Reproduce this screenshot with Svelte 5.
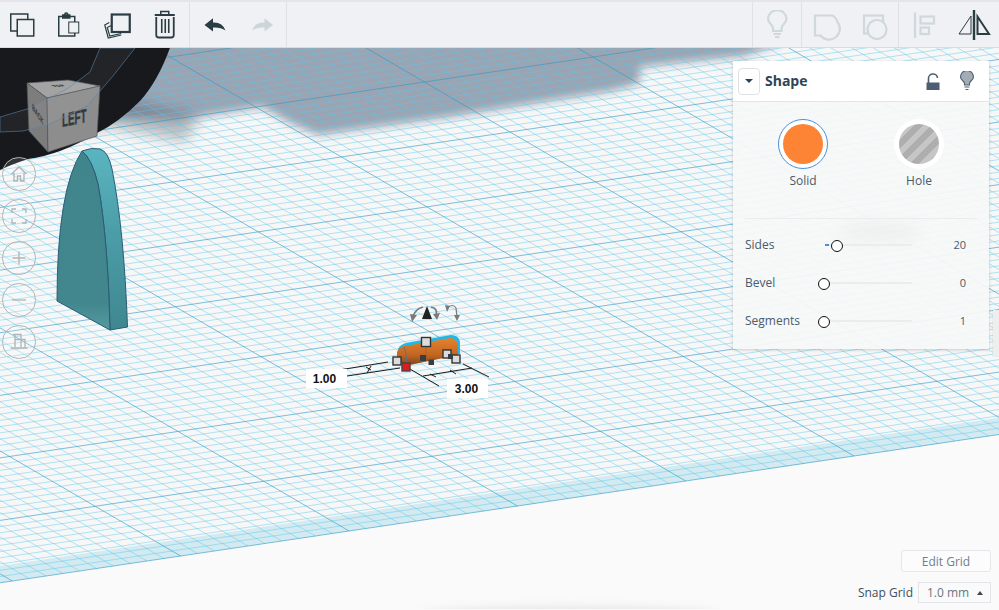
<script lang="ts">
  // grid block coordinates -> screen pixels, measured from major line crossings
  const anchors = [
    [0, 0, 170, 58],
    [2, 1, 593, 58],
    [-4, 8, 180.7, 557],
    [0, 8, 854, 457]
  ];

  function solve(m: number[][]) {
    const n = m.length;
    for (let c = 0; c < n; c++) {
      let p = c;
      for (let r = c + 1; r < n; r++) if (Math.abs(m[r][c]) > Math.abs(m[p][c])) p = r;
      [m[c], m[p]] = [m[p], m[c]];
      for (let r = 0; r < n; r++) {
        if (r === c) continue;
        const f = m[r][c] / m[c][c];
        for (let k = c; k <= n; k++) m[r][k] -= f * m[c][k];
      }
    }
    return m.map((row, i) => row[n] / row[i]);
  }

  const rows: number[][] = [];
  for (const [u, v, x, y] of anchors) {
    rows.push([u, v, 1, 0, 0, 0, -u * x, -v * x, x]);
    rows.push([0, 0, 0, u, v, 1, -u * y, -v * y, y]);
  }
  const h = solve(rows);

  function pt(u: number, v: number) {
    const w = h[6] * u + h[7] * v + 1;
    return ((h[0] * u + h[1] * v + h[2]) / w).toFixed(1) + ' ' + ((h[3] * u + h[4] * v + h[5]) / w).toFixed(1);
  }

  const uMin = -8, uMax = 8, vMin = -3, vMax = 8;
  let minor = '', major = '';
  for (let k = uMin * 10; k <= uMax * 10; k++) {
    const d = `M${pt(k / 10, vMin)}L${pt(k / 10, vMax)}`;
    if (k % 10 === 0) major += d; else minor += d;
  }
  for (let k = vMin * 10; k <= vMax * 10; k++) {
    const d = `M${pt(uMin, k / 10)}L${pt(uMax, k / 10)}`;
    if (k % 10 === 0) major += d; else minor += d;
  }
  const plane = `M${pt(uMin, vMin)}L${pt(uMax, vMin)}L${pt(uMax, vMax)}L${pt(uMin, vMax)}Z`;
  const band = `M${pt(uMin, 7.73)}L${pt(uMax, 7.73)}L${pt(uMax, vMax)}L${pt(uMin, vMax)}Z`;

  const params = [
    { label: 'Sides', value: 20, pos: 11, fill: 4 },
    { label: 'Bevel', value: 0, pos: -2, fill: 0 },
    { label: 'Segments', value: 1, pos: -2, fill: 0 }
  ];
</script>

<div class="app">
  <header class="toolbar">
    <div class="group first">
      <button aria-label="Copy">
        <svg width="30" height="30" viewBox="8.75 9 30 30" class="dark">
          <rect x="10.5" y="13" width="17" height="17" />
          <rect x="17" y="18.5" width="16.5" height="16.5" class="bar" />
        </svg>
      </button>
      <button aria-label="Paste">
        <svg width="30" height="30" viewBox="56.25 9 30 30" class="dark">
          <path d="M63 15.5H59V35H75V15.5H70" />
          <rect x="63" y="14" width="7" height="3" fill="#2a3d42" />
          <circle cx="66.5" cy="13.5" r="1.5" />
          <rect x="69" y="21" width="10" height="11" fill="#f0f1f4" stroke-width="1" />
        </svg>
      </button>
      <button aria-label="Duplicate">
        <svg width="30" height="30" viewBox="103.75 9 30 30" class="dark">
          <path d="M110 21.5L105.500 24L109 37L122 34" stroke-width="1.2" />
          <path d="M112 24.500L108 26.500L110.500 35L122 32.500" stroke-width="1.2" />
          <rect x="112.500" y="13.500" width="18" height="17.500" stroke-width="2.2" class="bar" />
        </svg>
      </button>
      <button aria-label="Delete">
        <svg width="30" height="30" viewBox="151.25 9 30 30" class="dark">
          <path d="M156 14H176" stroke-width="2" />
          <path d="M162 13.5V10.5H170V13.5" stroke-width="1.5" />
          <path d="M157.5 16V34Q157.5 36.5 160 36.5H172.5Q175 36.5 175 34V16" stroke-width="1.8" />
          <path d="M163 18V32M166.5 18V32M170 18V32" stroke-width="1.6" />
        </svg>
      </button>
    </div>
    <div class="group">
      <button aria-label="Undo">
        <svg width="30" height="30" viewBox="199.5 9 30 30">
          <path d="M205 24L213.5 17.3V21.5Q223 21 226 29.5Q221 26 213.5 26.5V30.5Z" fill="#2a3d42" />
        </svg>
      </button>
      <button aria-label="Redo">
        <svg width="30" height="30" viewBox="247.5 9 30 30">
          <path d="M273.5 24L265 17.3V21.5Q255.5 21 252.5 29.5Q257.5 26 265 26.5V30.5Z" fill="#ccd6da" />
        </svg>
      </button>
    </div>
    <div class="spacer"></div>
    <div class="group left-line">
      <button aria-label="Notes">
        <svg width="30" height="30" viewBox="762 9 30 30" class="light">
          <path d="M773 30V27.5Q773 25.5 771 23.5Q768 20.5 768 17.5A9.3 9.3 0 0 1 786.5 17.5Q786.5 20.5 783.5 23.5Q781.5 25.5 781.5 27.5V30Z" />
          <path d="M773.5 33H781M775 36H779.5" />
        </svg>
      </button>
    </div>
    <div class="group left-line">
      <button aria-label="Group">
        <svg width="30" height="30" viewBox="811 9 30 30" class="light" style="overflow:visible">
          <path d="M815 14.5H832Q836 16 837.5 21A9.8 9.8 0 0 1 820.5 34.5H815Z" />
        </svg>
      </button>
      <button aria-label="Ungroup">
        <svg width="30" height="30" viewBox="859 9 30 30" class="light">
          <rect x="864" y="14.5" width="19" height="18" />
          <circle cx="877" cy="28.5" r="9.5" fill="#f0f1f4" />
        </svg>
      </button>
    </div>
    <div class="group left-line last">
      <button aria-label="Align">
        <svg width="30" height="30" viewBox="908 9 30 30" class="light">
          <path d="M914 11.5V37" />
          <rect x="919.5" y="15.5" width="13.5" height="7" />
          <rect x="919.5" y="26.5" width="8.5" height="6.5" />
        </svg>
      </button>
      <button aria-label="Mirror">
        <svg width="34" height="34" viewBox="954 7 34 34" class="dark">
          <path d="M971 9V39" stroke-width="2.4" />
          <path d="M956 33L968 15V33Z" stroke-width="1" />
          <path d="M974.5 15.5V33H986Z" stroke-width="2" />
        </svg>
      </button>
    </div>
  </header>

  <main class="scene">
    <svg class="world" width="999" height="561" viewBox="0 49 999 561">
      <path d={plane} fill="#f7f7f7" />
      <path d={band} fill="rgba(130,205,230,0.3)" />

      <g class="soft">
        <path d="M0 150L110 128L185 143L200 118L120 100H0Z" fill="rgba(70,75,85,0.34)" />
      </g>
      <g class="soft-sharp">
        <path d="M-10 40H790L745 57L640 68L640 84L612 92L450 118L318 136L292 125L262 108L180 121L110 118L0 130Z" fill="rgba(42,62,93,0.45)" />
      </g>
      <path d={minor} fill="none" stroke="rgba(90,200,235,0.5)" stroke-width="0.9" />
      <path d={major} fill="none" stroke="rgba(45,155,200,0.62)" stroke-width="1" />
      <ellipse class="soft-wide" cx="570" cy="616" rx="150" ry="8" fill="rgba(120,120,120,0.16)" />
      <ellipse class="soft-panel" cx="880" cy="233" rx="42" ry="9" fill="rgba(0,0,0,0.6)" />

      <!-- workplane dome -->
      <path d="M0 40H173Q160 80 140 102Q118 124 97 134Q60 156 28 160Q10 166 0 171Z" fill="#17191c" />

      <!-- view cube -->
      <g stroke="#55585c" stroke-width="0.7" stroke-linejoin="round">
        <path d="M27 84L68 81L100 87L47 99Z" fill="#a3a3a3" />
        <path d="M27 84L47 99L48 153L29 132Z" fill="#7d7d7d" />
        <path d="M47 99L100 87L97 137L48 153Z" fill="#8d8d8d" />
      </g>
      <text class="cube-text" transform="matrix(0.7 -0.14 0 1.35 62 128)" font-size="14">LEFT</text>
      <text class="cube-text" transform="matrix(0.42 0.62 -0.05 0.9 32 110)" font-size="9">BACK</text>
      <text class="cube-text" transform="matrix(0.7 -0.05 0.5 0.3 54 88)" font-size="8">TOP</text>

      <path d="M100 49L90 73L67 90L27 110L0 118V133L23 132L50 125L87 107L113 77L135 49Z" fill="rgba(255,255,255,0.05)" stroke="#5d85ab" stroke-opacity="0.75" stroke-width="0.8" />

      <!-- extruded roof -->
      <path d="M82 152Q92 148 100 150Q108 152 112 170Q124 230 127.500 328L110 331Q108 240 98 185Q92 160 82 152Z" fill="url(#side)" stroke="#2d5c76" stroke-width="1" stroke-linejoin="round" />
      <path d="M57 302Q57 190 82 152Q92 160 98 185Q108 240 110 331Z" fill="url(#front)" stroke="#2d5c76" stroke-width="1" stroke-linejoin="round" />

      <!-- selection -->
      <g stroke="#1c1c1c" stroke-width="1" fill="none">
        <path d="M388 363L333 372M400 369L347 377" />
        <path d="M410 370L439 387M463 365L489 378M423 377L472 369" />
        <path d="M366 368L371 371M371 367L367 374M430 375L436 378M450 371L456 375" />
      </g>
      <path d="M398 350Q400 345 408 343.500L451 336Q459 336 460 343V355H457V346Q456 340 450 340L408 348Q401 349 399 353Z" fill="#22b8e6" />
      <path d="M397 362V353Q399 347 408 346.500L450 339Q457 339 458 346V356L405 367Z" fill="url(#body)" />
      <path d="M404 348Q408 356 406 366" fill="none" stroke="#5d6f80" stroke-width="0.9" />
      <path d="M426 344V362" fill="none" stroke="#9b5a2c" stroke-width="0.5" />
      <g stroke="#333" stroke-width="1.4" fill="#dcdcdc">
        <rect x="421.500" y="338.500" width="9" height="9" />
        <rect x="393" y="358" width="8" height="8" />
        <rect x="443" y="351" width="8" height="8" />
        <rect x="452" y="356" width="8" height="8" />
      </g>
      <rect x="402" y="364" width="8" height="8" fill="#e01b1b" stroke="#444" stroke-width="1.4" />
      <g fill="#3a3d40">
        <rect x="420" y="356" width="6" height="6" />
        <rect x="428.500" y="360.500" width="5.500" height="5.500" />
        <rect x="448" y="355" width="5" height="5" />
      </g>

      <!-- rotate handles -->
      <path d="M427 307L432 320H422Z" fill="#222" />
      <g fill="none" stroke="#7a7a7a" stroke-width="1.6">
        <path d="M413 318Q415 310 423 308M431 308Q438 309 436 316" />
        <path d="M447 309Q453 304 456 309L457 318" stroke-width="1.2" />
      </g>
      <path d="M410 315L417 316L412 323ZM433 315L440 314L437 321ZM454 316L460 316L457 322ZM445 306L450 307L447 313Z" fill="#7a7a7a" />
    </svg>

    <div class="viewnav">
      <button aria-label="Home">
        <svg width="20" height="20" viewBox="0 0 20 20"><path d="M2.500 10L10 3L17.500 10M5 9V17H8.500V12H11.500V17H15V9" /></svg>
      </button>
      <button aria-label="Fit">
        <svg width="20" height="20" viewBox="0 0 20 20"><path d="M3 7V3H7M13 3H17V7M17 13V17H13M7 17H3V13" /></svg>
      </button>
      <button aria-label="Zoom in">
        <svg width="20" height="20" viewBox="0 0 20 20"><path d="M3.500 10H16.500M10 3.500V16.500" stroke-width="1.800" /></svg>
      </button>
      <button aria-label="Zoom out">
        <svg width="20" height="20" viewBox="0 0 20 20"><path d="M3 10H17" stroke-width="1.800" /></svg>
      </button>
      <button aria-label="Perspective">
        <svg width="20" height="20" viewBox="0 0 20 20"><path d="M4 2.500H12V15M6 2.500V15M6 7.500H16V15M1.500 16H18.500" stroke-width="1.100" /></svg>
      </button>
    </div>

    <section class="panel">
      <div class="panel-head">
        <button class="drop" aria-label="Collapse"><span class="caret"></span></button>
        <h2>Shape</h2>
        <svg class="lock" width="16" height="20" viewBox="0 0 16 20">
          <path d="M3.500 12V8A4.500 4.500 0 0 1 12.500 7" fill="none" stroke="#4c5f70" stroke-width="1.600" />
          <path d="M1.500 11.500H14.500V19H1.500Z" fill="#4c5f70" />
        </svg>
        <svg class="bulb" width="16" height="20" viewBox="0 0 16 20">
          <path d="M5.500 14V12.500Q5.500 11.500 4 10Q1.500 8 1.500 6A6.500 6.500 0 0 1 14.500 6Q14.500 8 12 10Q10.500 11.500 10.500 12.500V14Z" fill="#a3acb5" stroke="#4c5f70" stroke-width="1.100" />
          <path d="M5.500 16H10.500M6.500 18.500H9.500" stroke="#4c5f70" stroke-width="1.200" />
        </svg>
      </div>
      <div class="kinds">
        <div class="kind">
          <span class="swatch ring"><span class="solid"></span></span>
          <span>Solid</span>
        </div>
        <div class="kind">
          <span class="swatch"><span class="hole"></span></span>
          <span>Hole</span>
        </div>
      </div>
      <div class="rows">
        {#each params as p}
          <div class="row">
            <span class="name">{p.label}</span>
            <span class="track">
              {#if p.fill}<span class="fill" style="width: {p.fill}px"></span>{/if}
              <span class="knob" style="left: {p.pos}px"></span>
            </span>
            <span class="val">{p.value}</span>
          </div>
        {/each}
      </div>
    </section>
    <div class="tab"></div>

    <div class="gridctl">
      <button class="edit">Edit Grid</button>
      <div class="snap">
        <span>Snap Grid</span>
        <span class="select">1.0 mm <span class="up"></span></span>
      </div>
    </div>

    <span class="dim dim-a">1.00</span>
    <span class="dim dim-b">3.00</span>
  </main>

  <svg width="0" height="0" class="defs">
    <defs>
      <linearGradient id="side" x1="0" y1="0" x2="0" y2="1">
        <stop offset="0" stop-color="#5ab5c0" />
        <stop offset="0.45" stop-color="#4b9ea8" />
        <stop offset="1" stop-color="#3f8790" />
      </linearGradient>
      <linearGradient id="front" x1="0" y1="0" x2="0" y2="1">
        <stop offset="0" stop-color="#40848c" />
        <stop offset="0.85" stop-color="#42868e" />
        <stop offset="1" stop-color="#559aa1" />
      </linearGradient>
      <linearGradient id="body" x1="0" y1="0" x2="0" y2="1">
        <stop offset="0" stop-color="#e5822f" />
        <stop offset="0.6" stop-color="#c26622" />
        <stop offset="1" stop-color="#7a431d" />
      </linearGradient>
    </defs>
  </svg>
</div>

<style>
  :global(body) {
    margin: 0;
    background: #fafafa;
  }

  .app {
    width: 999px;
    height: 610px;
    overflow: hidden;
    display: flex;
    flex-direction: column;
    font-family: "Open Sans", "Liberation Sans", sans-serif;
    color: #3d5062;
  }

  button {
    font: inherit;
    padding: 0;
    border: none;
    background: none;
  }

  .toolbar {
    display: flex;
    height: 48px;
    flex: none;
    background: #f0f1f4;
    border-top: 2px solid #e3e5ea;
    border-bottom: 1px solid #d8dade;
    box-sizing: border-box;
  }

  .group {
    display: flex;
    border-right: 1px solid #dfe1e5;
  }
  .group.first { width: 190px; box-sizing: border-box; }
  .group.last { border-right: none; }
  .group.left-line { border-right: none; border-left: 1px solid #dfe1e5; }
  .group button {
    width: 48px;
    display: flex;
    align-items: center;
    justify-content: center;
  }
  .group.first button { width: 47.25px; }
  .group.last button { width: 50px; }
  .spacer { flex: 1; }

  .dark { fill: none; stroke: #2a3d42; stroke-width: 1.5; }
  .dark .bar { fill: #f0f1f4; }
  .light { fill: none; stroke: #cfd8dc; stroke-width: 2.2; }

  .scene {
    position: relative;
    flex: 1;
    background: #fafafa;
  }

  .world {
    position: absolute;
    left: 0;
    top: 0;
    display: block;
  }
  .soft { filter: blur(7px); }
  .soft-sharp { filter: blur(5px); }
  .soft-wide { filter: blur(5px); }
  .soft-panel { filter: blur(8px); }
  .cube-text {
    font-family: "Liberation Sans", sans-serif;
    font-weight: 700;
    fill: #34393f;
    stroke: #34393f;
    stroke-width: 0.35;
  }
  .defs { position: absolute; }

  .viewnav {
    position: absolute;
    left: 2px;
    top: 109px;
    display: flex;
    flex-direction: column;
    gap: 8.5px;
  }
  .viewnav button {
    width: 33.5px;
    height: 33.5px;
    box-sizing: border-box;
    border: 1px solid #b4b4b4;
    border-radius: 50%;
    background: rgba(255, 255, 255, 0.12);
    display: flex;
    align-items: center;
    justify-content: center;
  }
  .viewnav path {
    fill: none;
    stroke: #b2b2b2;
    stroke-width: 1.3;
  }

  .panel {
    position: absolute;
    left: 733px;
    top: 13px;
    width: 256px;
    height: 288px;
    background: rgba(247, 248, 248, 0.94);
    box-shadow: 0 1px 3px rgba(0, 0, 0, 0.18);
  }
  .panel-head {
    height: 40px;
    display: flex;
    align-items: center;
    padding: 0 14px 0 5px;
    background: #fff;
    border-bottom: 1px solid #e3e5e6;
  }
  .drop {
    width: 22px;
    height: 27px;
    box-sizing: border-box;
    border: 1px solid #dfe1e3;
    border-radius: 4px;
    display: flex;
    align-items: center;
    justify-content: center;
  }
  .caret {
    width: 0;
    height: 0;
    border: 4px solid transparent;
    border-top: 4.5px solid #2f4252;
    border-bottom: none;
  }
  h2 {
    margin: -1px 0 0 5px;
    flex: 1;
    font-size: 14px;
    font-weight: 700;
    color: #2f4458;
  }
  .lock { margin-right: 18px; }

  .kinds {
    display: flex;
    padding-top: 17px;
    height: 117px;
    box-sizing: border-box;
    margin: 0 12px;
    border-bottom: 1px solid #ebecec;
  }
  .kind {
    width: 116px;
    display: flex;
    flex-direction: column;
    align-items: center;
    gap: 3px;
    font-size: 12px;
    color: #4a5b6a;
  }
  .swatch {
    width: 50px;
    height: 50px;
    box-sizing: border-box;
    border-radius: 50%;
    background: #fff;
    display: flex;
    align-items: center;
    justify-content: center;
  }
  .swatch.ring { border: 1.5px solid #4a90d9; }
  .solid, .hole {
    width: 40px;
    height: 40px;
    border-radius: 50%;
  }
  .solid { background: #fd8335; }
  .hole {
    background: repeating-linear-gradient(135deg, #aeaeae 0 6px, #c6c6c6 6px 12px);
  }

  .rows {
    padding: 6px 23px 0 12px;
  }
  .row {
    height: 38px;
    display: flex;
    align-items: center;
    font-size: 12px;
    color: #4a5b6a;
  }
  .name { width: 80px; }
  .track {
    position: relative;
    width: 87px;
    height: 2px;
    margin-top: 2px;
    background: #ececec;
  }
  .fill {
    position: absolute;
    left: 0;
    top: 0;
    height: 2px;
    background: #4a90d9;
  }
  .knob {
    position: absolute;
    top: -4px;
    margin-left: -5px;
    width: 12px;
    height: 12px;
    box-sizing: border-box;
    border: 1.5px solid #111;
    border-radius: 50%;
    background: #fff;
  }
  .val {
    flex: 1;
    margin-top: 1px;
    text-align: right;
    font-size: 11px;
  }

  .tab {
    position: absolute;
    left: 993px;
    top: 262px;
    width: 6px;
    height: 46px;
    background: #eeeeee;
    box-shadow: 0 0 1px rgba(0, 0, 0, 0.25);
  }

  .gridctl {
    position: absolute;
    right: 8px;
    bottom: 7px;
    display: flex;
    flex-direction: column;
    align-items: flex-end;
    gap: 10px;
    font-size: 12px;
  }
  .edit {
    width: 90px;
    height: 22px;
    box-sizing: border-box;
    border: 1px solid #e5e7ed;
    border-radius: 3px;
    background: #fcfcfc;
    color: #6f8090;
  }
  .snap {
    display: flex;
    align-items: center;
    gap: 5px;
    color: #3d5060;
  }
  .select {
    width: 73px;
    height: 21px;
    box-sizing: border-box;
    border: 1px solid #e2e4ea;
    padding-left: 8px;
    display: flex;
    align-items: center;
    gap: 8px;
    color: #697684;
  }
  .up {
    width: 0;
    height: 0;
    border: 3.5px solid transparent;
    border-bottom: 4px solid #444;
    border-top: none;
  }

  .dim {
    position: absolute;
    height: 19px;
    line-height: 20px;
    width: 41px;
    box-sizing: border-box;
    text-align: center;
    background: #fff;
    font-family: "Liberation Sans", sans-serif;
    font-size: 12px;
    font-weight: 700;
    color: #111;
  }
  .dim-a { left: 306px; top: 321px; padding-right: 4px; }
  .dim-b { left: 447px; top: 331px; padding-right: 2px; }
</style>
